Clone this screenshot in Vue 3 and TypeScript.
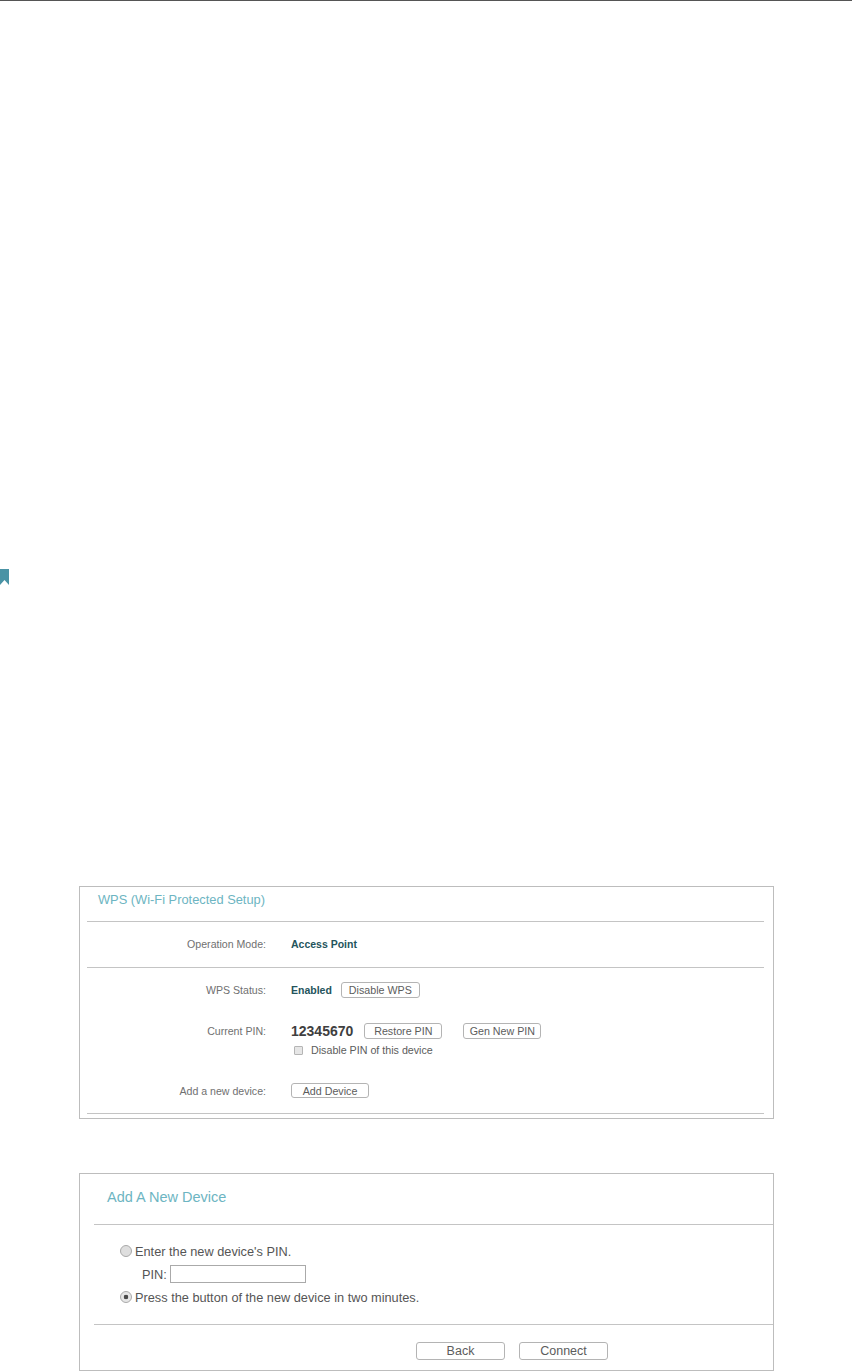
<script setup lang="ts">
const title = 'WPS (Wi-Fi Protected Setup)'
</script>

<template>
  <main class="page">
    <div class="marker"><svg width="9" height="16" viewBox="0 0 9 16"><path d="M0 0H9V16L4.5 11L0 16Z" fill="#4a93a5" /></svg></div>

    <section class="panel wps">
      <h2 class="wps-title">{{ title }}</h2>
      <div class="rule"></div>
      <div class="row mode">
        <span class="label">Operation Mode:</span>
        <strong class="value">Access Point</strong>
      </div>
      <div class="rule"></div>
      <div class="row status">
        <span class="label">WPS Status:</span>
        <div class="cell">
          <strong class="value">Enabled</strong>
          <button class="btn disable">Disable WPS</button>
        </div>
      </div>
      <div class="row pin">
        <span class="label">Current PIN:</span>
        <div class="cell">
          <strong class="pin-number">12345670</strong>
          <button class="btn restore">Restore PIN</button>
          <button class="btn gen">Gen New PIN</button>
        </div>
      </div>
      <label class="check-row">
        <input type="checkbox" class="check" />
        <span>Disable PIN of this device</span>
      </label>
      <div class="row add">
        <span class="label">Add a new device:</span>
        <button class="btn add-btn">Add Device</button>
      </div>
      <div class="rule"></div>
    </section>

    <section class="panel device">
      <h2 class="device-title">Add A New Device</h2>
      <div class="rule-open"></div>
      <div class="options">
        <label class="option">
          <input type="radio" name="mode" class="radio" />
          <span>Enter the new device's PIN.</span>
        </label>
        <div class="pin-row">
          <span>PIN:</span>
          <input type="text" class="pin-input" />
        </div>
        <label class="option">
          <input type="radio" name="mode" class="radio" checked />
          <span>Press the button of the new device in two minutes.</span>
        </label>
      </div>
      <div class="rule-open"></div>
      <div class="actions">
        <button class="btn wide">Back</button>
        <button class="btn wide">Connect</button>
      </div>
    </section>
  </main>
</template>

<style>
html, body { margin: 0; background: #fff; }
</style>

<style scoped>
.page {
  box-sizing: border-box;
  height: 1371px;
  overflow: hidden;
  border-top: 1px solid #555;
  font-family: "Liberation Sans", Arial, sans-serif;
  color: #555;
}
.marker { height: 16px; margin-top: 568px; line-height: 0; }
.panel {
  box-sizing: border-box;
  width: 695px;
  margin-left: 79px;
  border: 1px solid #bdbdbd;
}
.wps { height: 233px; margin-top: 301px; padding: 0 9px 0 7px; }
.device { height: 198px; margin-top: 54px; padding-left: 14px; }
h2 { margin: 0; font-weight: 400; color: #6db5c2; }
.wps-title { height: 34px; padding-left: 11px; font-size: 12.85px; line-height: 26px; }
.device-title { height: 50px; padding-left: 13px; font-size: 14.5px; line-height: 46px; }
.rule { height: 1px; background: #c4c4c4; }
.rule-open { height: 1px; background: #c4c4c4; }
.row {
  box-sizing: border-box;
  display: grid;
  grid-template-columns: 179px 1fr;
  column-gap: 25px;
  align-items: center;
  font-size: 10.6px;
}
.label { text-align: right; color: #707070; }
.value { font-weight: 700; font-size: 10.5px; color: #24545c; }
.cell { display: flex; align-items: center; }
.mode { height: 45px; padding-bottom: 2px; }
.status { height: 45px; padding-bottom: 2px; }
.pin { height: 37px; padding-bottom: 2px; }
.add { height: 42px; margin-top: 14px; padding-bottom: 3px; }
.btn {
  box-sizing: border-box;
  height: 16px;
  padding: 0;
  border: 1px solid #b4b4b4;
  border-radius: 3px;
  background: #fff;
  color: #5c5c5c;
  font: 10.7px "Liberation Sans", Arial, sans-serif;
}
.disable { width: 79px; margin-left: 9px; }
.pin-number { font-size: 14px; font-weight: 700; color: #3f3f3f; }
.restore { width: 78px; margin-left: 11px; }
.gen { width: 78px; margin-left: 21px; }
.add-btn { width: 78px; height: 15px; }
.check-row {
  display: flex;
  align-items: center;
  height: 14px;
  margin-left: 207px;
  margin-top: -7px;
  font-size: 10.7px;
  color: #5c5c5c;
}
.check {
  appearance: none;
  box-sizing: border-box;
  width: 9px;
  height: 9px;
  margin: 0 8px 0 0;
  border: 1px solid #b5b5b5;
  border-radius: 1px;
  background: #e6e6e6;
}
.options { height: 99px; padding: 16px 0 0 26px; box-sizing: border-box; }
.option { display: flex; align-items: center; height: 20px; font-size: 12.75px; color: #555; }
.radio {
  appearance: none;
  box-sizing: border-box;
  flex: none;
  width: 12px;
  height: 12px;
  margin: 0 3px 0 0;
  border: 1px solid #a9a9a9;
  border-radius: 50%;
  background: #dedede;
}
.radio:checked { background: radial-gradient(circle, #4a4a4a 0 2px, #e6e6e6 2.6px); }
.pin-row { display: flex; align-items: center; height: 26px; padding-left: 22px; font-size: 12.75px; }
.pin-input {
  box-sizing: border-box;
  width: 136px;
  height: 18px;
  margin-left: 3px;
  border: 1px solid #aaa;
  background: #fff;
}
.actions { display: flex; gap: 14px; padding: 17px 0 0 322px; }
.wide { width: 89px; height: 18px; font-size: 12.5px; }
</style>
